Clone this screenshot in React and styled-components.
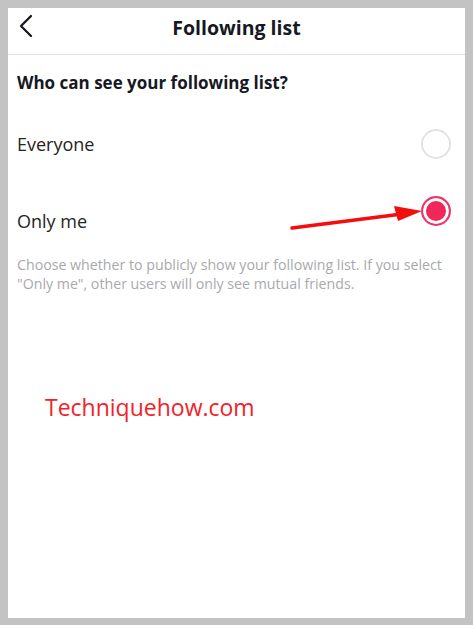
import React from "react";
import styled, { createGlobalStyle } from "styled-components";

const Global = createGlobalStyle`
  html, body {
    margin: 0;
    padding: 0;
    background: #c3c3c3;
  }
`;

const Frame = styled.div`
  box-sizing: border-box;
  width: 473px;
  height: 625px;
  padding: 8px 8px 7px 8px;
  background: #c3c3c3;
`;

const Screen = styled.div`
  height: 100%;
  background: #fff;
  font-family: "Open Sans", "Noto Sans", sans-serif;
  color: #161823;
  display: flex;
  flex-direction: column;
  position: relative;
`;

const Header = styled.div`
  height: 46px;
  border-bottom: 1px solid #e3e3e4;
  display: flex;
  align-items: center;
  justify-content: center;
  position: relative;
`;

const Back = styled.div`
  position: absolute;
  left: 11px;
  top: 6px;
  width: 16px;
  height: 24px;
`;

const Title = styled.h1`
  margin: 0 0 8px 0;
  font-size: 19.5px;
  font-weight: 700;
`;

const Body = styled.div`
  padding: 18px 9px 0 9px;
  display: flex;
  flex-direction: column;
`;

const Question = styled.div`
  font-size: 17px;
  font-weight: 700;
  line-height: 20px;
`;

const Option = styled.div`
  display: flex;
  align-items: center;
  justify-content: space-between;
  height: ${(p) => p.$h}px;
  padding-right: 5px;
`;

const Label = styled.div`
  font-size: 18px;
  color: #242424;
  padding-top: ${(p) => p.$offset || 0}px;
`;

const Radio = styled.div`
  box-sizing: border-box;
  width: 30px;
  height: 30px;
  border-radius: 50%;
  border: 2px solid ${(p) => (p.$on ? "#e8386b" : "#e3e3e3")};
  background: ${(p) => (p.$on ? "#f0285a" : "#fff")};
  box-shadow: ${(p) => (p.$on ? "inset 0 0 0 3px #fff" : "none")};
  margin-top: ${(p) => p.$shift || 0}px;
`;

const Note = styled.p`
  margin: 5px 0 0 0;
  font-size: 14.2px;
  line-height: 19px;
  color: #a9a9ad;
  white-space: nowrap;
`;

const Watermark = styled.div`
  margin: 98px 0 0 28px;
  font-family: "Open Sans", sans-serif;
  font-size: 23px;
  color: #f2222a;
`;

const Arrow = styled.svg`
  position: absolute;
  left: 282px;
  top: 186px;
`;

export default function App() {
  return (
    <>
      <Global />
      <Frame>
        <Screen>
          <Header>
            <Back>
              <svg width="16" height="24" viewBox="0 0 16 24">
                <path d="M12 2 L2 12 L12 22" fill="none" stroke="#161823" strokeWidth="2.3" strokeLinecap="round" strokeLinejoin="round" />
              </svg>
            </Back>
            <Title>Following list</Title>
          </Header>
          <Body>
            <Question>Who can see your following list?</Question>
            <Option $h={78} style={{ marginTop: 12 }}>
              <Label>Everyone</Label>
              <Radio />
            </Option>
            <Option $h={67}>
              <Label $offset={8}>Only me</Label>
              <Radio $on $shift={-12} />
            </Option>
            <Note>
              Choose whether to publicly show your following list. If you select
              <br />
              "Only me", other users will only see mutual friends.
            </Note>
            <Watermark>Techniquehow.com</Watermark>
          </Body>
          <Arrow width="140" height="40" viewBox="0 0 140 40">
            <path d="M2 34 L112 20" stroke="#f50c0c" strokeWidth="3.5" strokeLinecap="round" />
            <path d="M104 12 L132 17 L108 27 Z" fill="#f50c0c" />
          </Arrow>
        </Screen>
      </Frame>
    </>
  );
}
